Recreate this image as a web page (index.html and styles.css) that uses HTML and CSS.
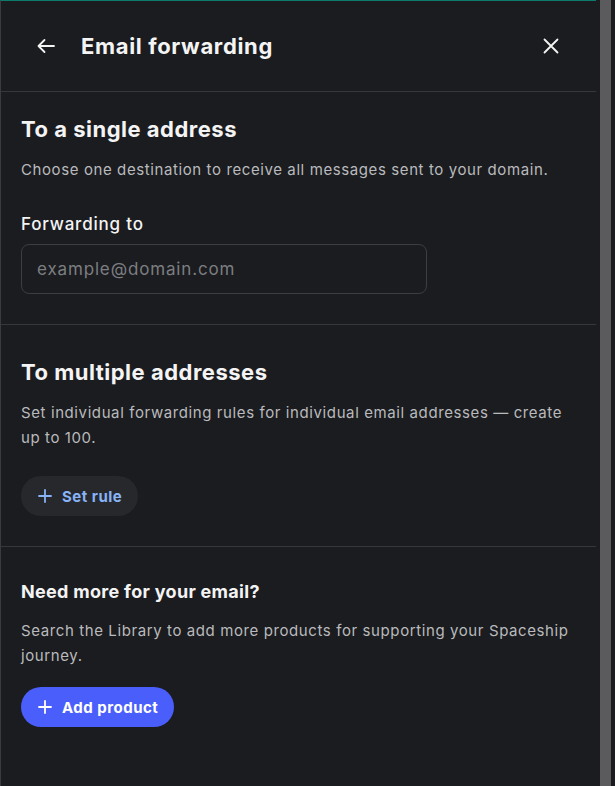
FILE: index.html
```html
<!DOCTYPE html>
<html lang="en">
<head>
<meta charset="utf-8">
<title>Email forwarding</title>
<link rel="stylesheet" href="styles.css">
</head>
<body>
<div class="frame">
  <aside class="panel">
    <header class="panel-header">
      <button class="icon-btn back" aria-label="Back">
        <svg width="20" height="20" viewBox="0 0 20 20" fill="none" stroke="currentColor" stroke-width="1.8" stroke-linecap="round" stroke-linejoin="round"><path d="M18 10H2.5M8.5 4L2.5 10l6 6"/></svg>
      </button>
      <h1 class="title">Email forwarding</h1>
      <button class="icon-btn close" aria-label="Close">
        <svg width="16" height="16" viewBox="0 0 16 16" fill="none" stroke="currentColor" stroke-width="1.8" stroke-linecap="round"><path d="M1.5 1.5l13 13M14.5 1.5l-13 13"/></svg>
      </button>
    </header>

    <section class="section single">
      <h2 class="section-title">To a single address</h2>
      <p class="desc">Choose one destination to receive all messages sent to your domain.</p>
      <label class="field-label" for="fwd">Forwarding to</label>
      <input id="fwd" class="input" type="text" placeholder="example@domain.com">
    </section>

    <section class="section multiple">
      <h2 class="section-title">To multiple addresses</h2>
      <p class="desc">Set individual forwarding rules for individual email addresses — create up to 100.</p>
      <button class="pill pill-ghost">
        <svg width="14" height="14" viewBox="0 0 14 14" fill="none" stroke="currentColor" stroke-width="1.8" stroke-linecap="round"><path d="M7 1v12M1 7h12"/></svg>
        <span>Set rule</span>
      </button>
    </section>

    <section class="section more">
      <h3 class="sub-title">Need more for your email?</h3>
      <p class="desc">Search the Library to add more products for supporting your Spaceship journey.</p>
      <button class="pill pill-primary">
        <svg width="14" height="14" viewBox="0 0 14 14" fill="none" stroke="currentColor" stroke-width="1.8" stroke-linecap="round"><path d="M7 1v12M1 7h12"/></svg>
        <span>Add product</span>
      </button>
    </section>
  </aside>
  <div class="scrollbar"></div>
</div>
</body>
</html>
```
FILE: styles.css
```css
* { box-sizing: border-box; }
html, body {
  margin: 0;
  height: 100%;
  background: #1b1c1f;
}
body {
  font-family: Inter, "Open Sans", "Liberation Sans", sans-serif;
  color: #f4f4f5;
}
.frame {
  display: flex;
  height: 786px;
}
.panel {
  width: 596px;
  flex: none;
  border-left: 1px solid #3a3b3f;
  border-top: 1px solid #0c7a6c;
  background: #1b1c1f;
}
.scrollbar {
  margin-left: 4px;
  width: 11px;
  background: #5b5b5d;
}
.panel-header {
  height: 91px;
  display: flex;
  align-items: center;
  padding: 0 37px 0 35px;
  border-bottom: 1px solid #36373b;
}
.icon-btn {
  background: none;
  border: 0;
  padding: 0;
  color: #f4f4f5;
  display: flex;
}
.title {
  margin: 0 0 0 25px;
  font-size: 22px;
  font-weight: 700;
  flex: 1;
  letter-spacing: 0.65px;
}
.section {
  padding: 33px 20px 30px;
  border-bottom: 1px solid #36373b;
}
.section.single { padding-top: 23px; }
.section:last-child { border-bottom: 0; }
.section-title {
  margin: 0;
  font-size: 22px;
  line-height: 28px;
  font-weight: 700;
  letter-spacing: 0.5px;
}
.sub-title {
  margin: 0;
  font-size: 18px;
  line-height: 24px;
  font-weight: 700;
  letter-spacing: 0.3px;
}
.desc {
  margin: 14px 0 0;
  font-size: 15px;
  line-height: 25px;
  color: #b9babd;
  letter-spacing: 0.6px;
}
.field-label {
  display: block;
  margin-top: 30px;
  font-size: 17px;
  font-weight: 500;
  line-height: 24px;
  letter-spacing: 0.8px;
}
.input {
  display: block;
  margin-top: 8px;
  width: 406px;
  height: 50px;
  border: 1px solid #3d3e42;
  border-radius: 8px;
  background: transparent;
  padding: 0 15px;
  font: inherit;
  font-size: 17px;
  letter-spacing: 0.85px;
  color: #f4f4f5;
  outline: none;
}
.input::placeholder { color: #7d7e82; }
.pill {
  height: 40px;
  border: 0;
  border-radius: 20px;
  display: inline-flex;
  align-items: center;
  gap: 10px;
  padding: 0 16px 0 17px;
  font: inherit;
  font-size: 15px;
  font-weight: 700;
}
.pill-ghost {
  margin-top: 26px;
  background: #26282c;
  color: #88b3f7;
  letter-spacing: 0.5px;
}
.pill-primary {
  margin-top: 19px;
  background: #4a5efc;
  color: #ffffff;
  letter-spacing: 0.5px;
}
```
